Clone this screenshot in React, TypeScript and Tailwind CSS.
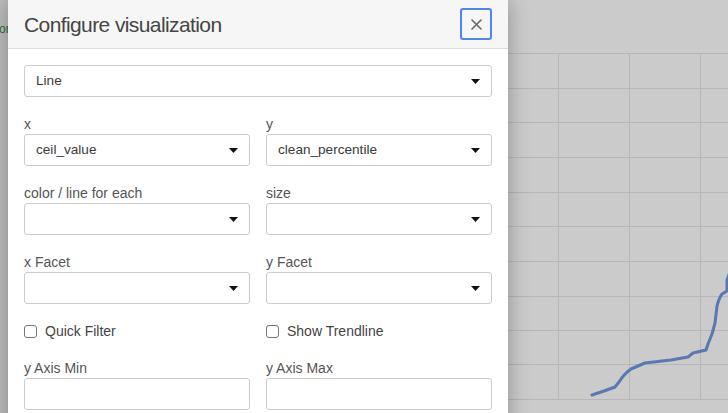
import React from "react";

const hLines = [53, 88, 122, 157, 192, 226, 261, 296, 330, 364, 399];
const vLines = [487, 558, 629, 700];

function Caret() {
  return (
    <svg width="9" height="5" viewBox="0 0 9 5" className="shrink-0">
      <polygon points="0,0 9,0 4.5,5" fill="#111" />
    </svg>
  );
}

function Select({ value }: { value?: string }) {
  return (
    <div className="h-8 w-full flex items-center justify-between pl-[11px] pr-[11px] border border-[#cccccc] rounded-[3px] bg-white text-[13.6px] text-[#3a3a3a]">
      <span>{value ?? ""}</span>
      <Caret />
    </div>
  );
}

function Field({ label, value, input }: { label: string; value?: string; input?: boolean }) {
  return (
    <div className="flex flex-col">
      <div className="h-5 leading-5 text-[14px] text-[#555]">{label}</div>
      {input ? (
        <div className="h-8 w-full border border-[#cccccc] rounded-[3px] bg-white" />
      ) : (
        <Select value={value} />
      )}
    </div>
  );
}

function Check({ label }: { label: string }) {
  return (
    <div className="h-5 flex items-center gap-[8px] text-[14px] text-[#444]">
      <div className="w-[13px] h-[13px] border border-[#767676] rounded-[3px] bg-white" />
      <span className="leading-5">{label}</span>
    </div>
  );
}

export default function App() {
  return (
    <div
      className="relative w-[728px] h-[413px] overflow-hidden bg-[#cbcbcb]"
      style={{ fontFamily: '"Liberation Sans", Arial, sans-serif' }}
    >
      <div className="absolute left-0 top-0 w-[8px] h-full bg-[#bdbdbd]" />
      <svg className="absolute inset-0" width="728" height="413" viewBox="0 0 728 413">
        {hLines.map((y) => (
          <line key={"h" + y} x1="480" x2="728" y1={y + 0.5} y2={y + 0.5} stroke="#b7b7b7" strokeWidth="1" />
        ))}
        {vLines.map((x) => (
          <line key={"v" + x} x1={x + 0.5} x2={x + 0.5} y1="53" y2="399" stroke="#b7b7b7" strokeWidth="1" />
        ))}
        <path
          d="M592 395 L604 391 L615 387 L619 382 Q624 374 631 369 L645 363 L671 360 L688 357 L693 353 L706 350 L708 344 L712 334 L715 323 L717 306 Q719 298 722 294 L727 291 L727 280 L730 272"
          fill="none"
          stroke="#5a78b2"
          strokeWidth="3"
          strokeLinejoin="round"
          strokeLinecap="round"
        />
      </svg>

      <div className="absolute left-0 top-[21px] text-[12px] leading-4 text-[#2f6f2a]" style={{ marginLeft: "-1px" }}>
        or
      </div>

      <div className="absolute left-[8px] top-0 w-[500px] h-[440px] bg-white shadow-[0_0_20px_rgba(0,0,0,0.3)]">
        <div className="h-[49px] bg-[#f6f6f6] border-b border-[#dddddd] flex items-center justify-between pl-4 pr-4">
          <div className="text-[21px] tracking-[-0.6px] text-[#454545] leading-none">
            Configure visualization
          </div>
          <div className="w-8 h-8 border-2 border-[#4f86f7] rounded-[3px] flex items-center justify-center">
            <svg width="11" height="11" viewBox="0 0 11 11">
              <path d="M1 1 L10 10 M10 1 L1 10" stroke="#666" strokeWidth="1.6" strokeLinecap="round" />
            </svg>
          </div>
        </div>

        <div className="px-4 pt-4 flex flex-col gap-[17px]">
          <Select value="Line" />
          <div className="grid grid-cols-2 gap-x-4 gap-y-[17px]">
            <Field label="x" value="ceil_value" />
            <Field label="y" value="clean_percentile" />
            <Field label="color / line for each" />
            <Field label="size" />
            <Field label="x Facet" />
            <Field label="y Facet" />
            <Check label="Quick Filter" />
            <Check label="Show Trendline" />
            <Field label="y Axis Min" input />
            <Field label="y Axis Max" input />
          </div>
        </div>
      </div>
    </div>
  );
}
